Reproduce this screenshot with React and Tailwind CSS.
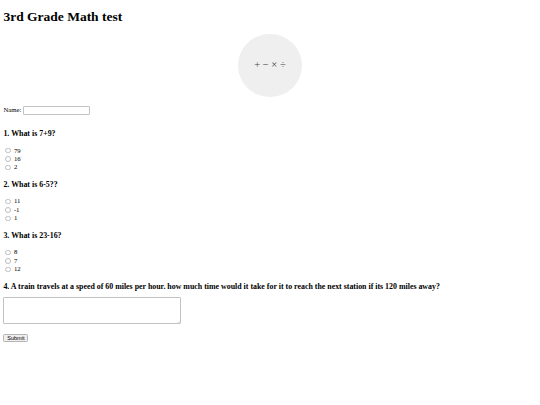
import React from "react";

const questions = [
  { q: "1. What is 7+9?", opts: ["79", "16", "2"] },
  { q: "2. What is 6-5??", opts: ["11", "-1", "1"] },
  { q: "3. What is 23-16?", opts: ["8", "7", "12"] },
];

const App = () => {
  return (
    <div className="min-h-screen bg-white px-[3.4px] font-['Liberation_Serif',serif] text-[6.75px] text-black">
      {/* Title */}
      <h1 className="pt-[9px] mb-[9px] text-[13.5px] font-bold leading-[15.5px]">
        3rd Grade Math test
      </h1>

      {/* Logo circle */}
      <div className="mx-auto flex h-[63.3px] w-[63.3px] items-center justify-center rounded-full bg-[#efefef] text-[10.5px] leading-none text-[#444444]">
        + − × ÷
      </div>

      <form>
        {/* Name */}
        <div className="mt-[8.9px] flex h-[9.3px] items-center">
          <label htmlFor="name" className="mr-[1.7px]">Name:</label>
          <input
            id="name"
            type="text"
            className="h-[9.3px] w-[67px] rounded-[1px] border-[0.6px] border-[#c2c2c2] bg-white outline-none"
          />
        </div>

        {/* Multiple choice */}
        <div className="mt-[13.8px]">
          {questions.map((item, i) => (
            <div key={i} className={i > 0 ? "mt-[8.2px]" : ""}>
              <h3 className="mb-[8.6px] text-[7.9px] font-bold leading-[9px]">{item.q}</h3>
              {item.opts.map((o) => (
                <div key={o} className="flex h-[8.4px] items-center">
                  <input
                    type="radio"
                    name={"q" + i}
                    className="ml-[2.1px] mr-[1.3px] h-[5.5px] w-[5.5px] appearance-none rounded-full border-[0.6px] border-[#bdbdbd] bg-white"
                  />
                  <span className="ml-[1.6px]">{o}</span>
                </div>
              ))}
            </div>
          ))}
        </div>

        {/* Free answer */}
        <h3 className="mt-[8.2px] text-[7.9px] font-bold leading-[9px]">
          4. A train travels at a speed of 60 miles per hour. how much time would it take for it to reach the next station if its 120 miles away?
        </h3>
        <div className="relative mt-[6.5px] h-[27.3px] w-[177.6px]">
          <textarea className="block h-full w-full resize-none rounded-[1px] border-[0.6px] border-[#c2c2c2] bg-white outline-none" />
          <svg className="absolute bottom-[1px] right-[1px]" width="3" height="3" viewBox="0 0 3 3">
            <path d="M0.5 3 L3 0.5 M1.8 3 L3 1.8" stroke="#a8a8a8" strokeWidth="0.4" />
          </svg>
        </div>

        <button
          type="button"
          className="mt-[10px] h-[7.8px] w-[25px] rounded-[1.3px] border-[0.6px] border-[#b5b5b5] bg-[#efefef] font-['Liberation_Sans',sans-serif] text-[5.6px] leading-none text-black"
        >
          Submit
        </button>
      </form>
    </div>
  );
};

export default App;
